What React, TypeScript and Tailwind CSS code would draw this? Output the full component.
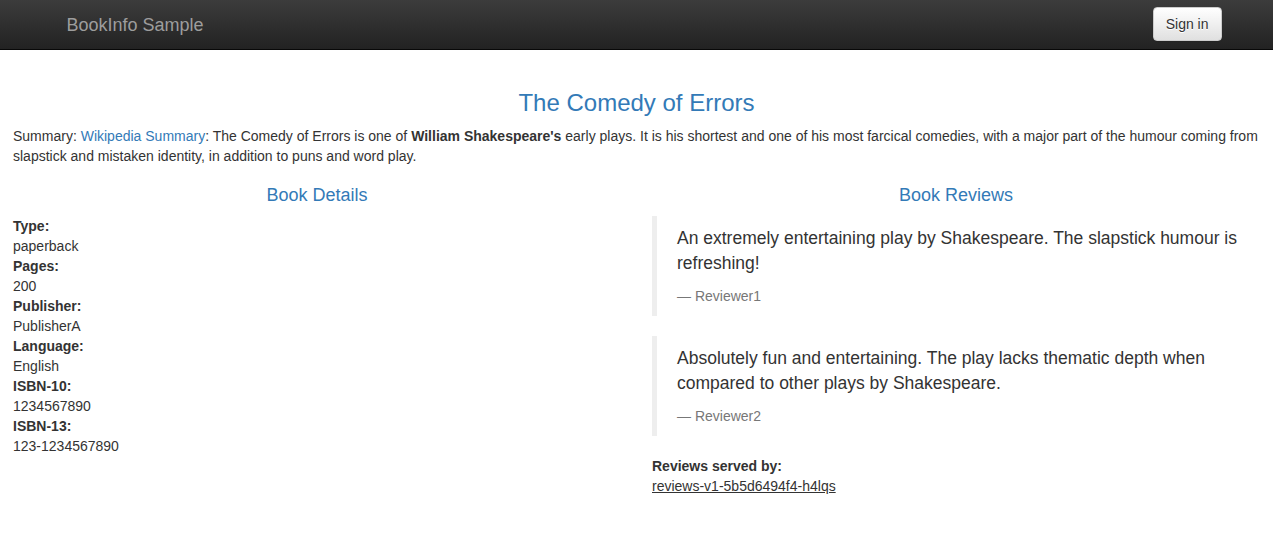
import React from "react";

// BookInfo product page
const details = [
  { label: "Type:", value: "paperback" },
  { label: "Pages:", value: "200" },
  { label: "Publisher:", value: "PublisherA" },
  { label: "Language:", value: "English" },
  { label: "ISBN-10:", value: "1234567890" },
  { label: "ISBN-13:", value: "123-1234567890" },
];

const reviews = [
  {
    text: "An extremely entertaining play by Shakespeare. The slapstick humour is refreshing!",
    who: "Reviewer1",
  },
  {
    text: "Absolutely fun and entertaining. The play lacks thematic depth when compared to other plays by Shakespeare.",
    who: "Reviewer2",
  },
];

const App = () => {
  return (
    <div className="min-h-screen bg-white font-['Liberation_Sans',Arial,sans-serif] text-[14px] leading-[20px] text-[#333]">
      {/* Navbar */}
      <nav className="box-border h-[50px] border-b border-[#080808] bg-[linear-gradient(to_bottom,#3c3c3c_0%,#222_100%)]">
        <div className="mx-auto flex w-[1170px] items-start justify-between">
          <a className="px-[15px] pt-[15px] text-[18px] leading-[20px] text-[#9d9d9d]">BookInfo Sample</a>
          <button className="mt-[7px] h-[34px] rounded-[4px] border border-[#ccc] bg-[linear-gradient(to_bottom,#fff_0%,#e0e0e0_100%)] px-[12px] text-[14px] leading-[20px] text-[#333] shadow-[inset_0_1px_0_rgba(255,255,255,0.15),0_1px_1px_rgba(0,0,0,0.075)] [text-shadow:0_1px_0_#fff]">
            Sign in
          </button>
        </div>
      </nav>

      <main className="px-[13px] pt-[40px]">
        <h3 className="mb-[10px] text-center text-[24px] leading-[26.4px] text-[#337ab7]">The Comedy of Errors</h3>
        <p className="mb-[10px]">
          Summary: <a className="text-[#337ab7]">Wikipedia Summary</a>: The Comedy of Errors is one of{" "}
          <b>William Shakespeare's</b> early plays. It is his shortest and one of his most farcical comedies, with a
          major part of the humour coming from slapstick and mistaken identity, in addition to puns and word play.
        </p>

        <div className="grid grid-cols-2 gap-x-[31px]">
          {/* Book details */}
          <div>
            <h4 className="my-[10px] text-center text-[18px] leading-[19.8px] text-[#337ab7]">Book Details</h4>
            <dl className="mb-[20px]">
              {details.map((d) => (
                <React.Fragment key={d.label}>
                  <dt className="font-bold">{d.label}</dt>
                  <dd>{d.value}</dd>
                </React.Fragment>
              ))}
            </dl>
          </div>

          {/* Reviews */}
          <div>
            <h4 className="my-[10px] text-center text-[18px] leading-[19.8px] text-[#337ab7]">Book Reviews</h4>
            {reviews.map((r) => (
              <blockquote key={r.who} className="mb-[20px] border-l-[5px] border-[#eee] px-[20px] py-[10px] text-[17.5px]">
                <p className="mb-[10px] leading-[25px]">{r.text}</p>
                <small className="block text-[14px] leading-[20px] text-[#777]">{"\u2014\u00a0" + r.who}</small>
              </blockquote>
            ))}
            <dl>
              <dt className="font-bold">Reviews served by:</dt>
              <u>reviews-v1-5b5d6494f4-h4lqs</u>
            </dl>
          </div>
        </div>
      </main>
    </div>
  );
};

export default App;
